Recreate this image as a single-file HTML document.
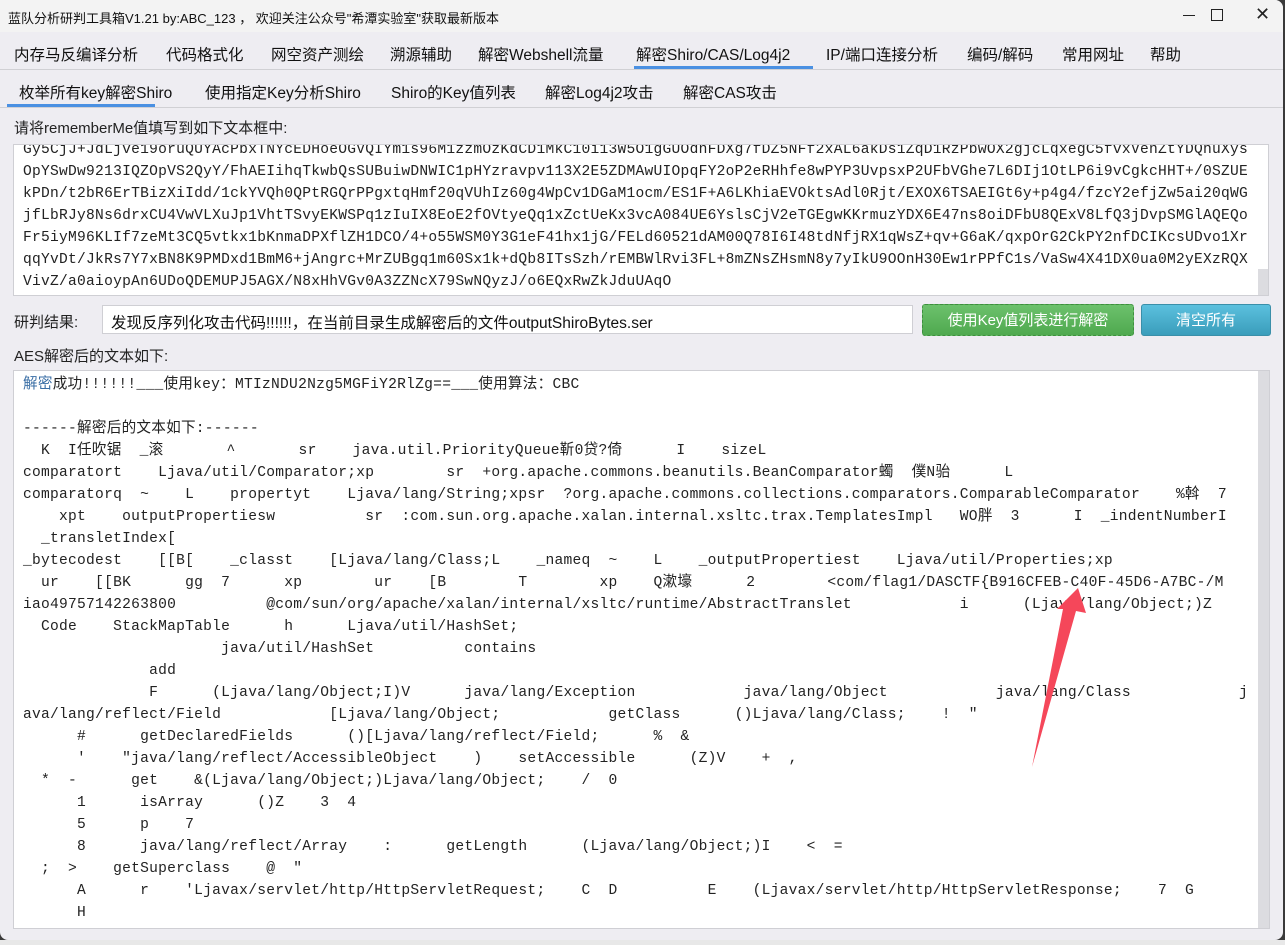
<!DOCTYPE html>
<html><head><meta charset="utf-8"><style>
*{margin:0;padding:0;box-sizing:border-box}
body{width:1285px;height:945px;overflow:hidden;background:#3a3a3a;font-family:"Liberation Sans","Noto Sans CJK SC",sans-serif;position:relative}
#win{position:absolute;left:0;top:0;width:1283px;height:940px;background:#eeedf2;border-radius:0 8px 8px 8px;overflow:hidden}
#title{position:absolute;left:0;top:0;width:100%;height:32px;background:#f3f3f3;font-size:13px;color:#111}
#title span{position:absolute;left:8px;top:8px}
.ctl{position:absolute;top:6px;font-size:16px;color:#222}
.menu{position:absolute;left:0;top:34px;height:36px;width:100%;border-bottom:1px solid #d0d0d4;font-size:15.5px;color:#111}
.menu span,.sub span{position:absolute;top:9px;white-space:nowrap}
.sub{position:absolute;left:0;top:72px;height:36px;width:100%;border-bottom:1px solid #d0d0d4;font-size:15.5px;color:#111}
.ul{position:absolute;height:3px;background:#4a90e2}
.lbl{position:absolute;font-size:15px;color:#222}
.box{position:absolute;background:#fff;border:1px solid #cfcfd4;overflow:hidden}
pre{font-family:"Liberation Mono","Noto Sans CJK SC",monospace;font-size:14.6px;line-height:22px;color:#222;white-space:pre;letter-spacing:0.25px}
.btn{position:absolute;color:#fff;font-size:15px;text-align:center;line-height:30px;border-radius:3px}
</style></head><body>
<div id="win">
<div id="title"><span>蓝队分析研判工具箱V1.21 by:ABC_123 ， 欢迎关注公众号"希潭实验室"获取最新版本</span>
<div class="ctl" style="left:1183px;top:5px;width:12px;height:1px;border-top:1.5px solid #222;margin-top:10px"></div>
<div class="ctl" style="left:1211px;top:5px;width:12px;height:12px;border:1.5px solid #222;margin-top:4px"></div>
<div class="ctl" style="left:1255px;top:4px;font-size:18px">✕</div></div>
<div class="menu">
<span style="left:14px">内存马反编译分析</span><span style="left:166px">代码格式化</span><span style="left:271px">网空资产测绘</span><span style="left:390px">溯源辅助</span><span style="left:478px">解密Webshell流量</span><span style="left:636px">解密Shiro/CAS/Log4j2</span><span style="left:826px">IP/端口连接分析</span><span style="left:967px">编码/解码</span><span style="left:1062px">常用网址</span><span style="left:1150px">帮助</span>
<div class="ul" style="left:634px;width:179px;top:32px"></div>
</div>
<div class="sub">
<span style="left:19px">枚举所有key解密Shiro</span><span style="left:205px">使用指定Key分析Shiro</span><span style="left:391px">Shiro的Key值列表</span><span style="left:545px">解密Log4j2攻击</span><span style="left:683px">解密CAS攻击</span>
<div class="ul" style="left:7px;width:148px;top:32px"></div>
</div>
<div class="lbl" style="left:14px;top:117px">请将rememberMe值填写到如下文本框中:</div>
<div class="box" style="left:13px;top:144px;width:1256px;height:152px">
<div style="position:absolute;right:0;top:124px;width:10px;height:28px;background:#dcdce0"></div>
<pre style="position:absolute;left:9px;top:-6px">Gy5CjJ+JdLjve19oruQUYAcPbxTNYcEDHoeOGVQIYm1s96M1zzmOzKdCD1MkC10i13W5O1gGUOdnFDXg7fDZ5NFf2xAL6akDs1ZqD1RzPbwOX2gjcLqxegC5fvxVenZtYDQhuXys
OpYSwDw9213IQZOpVS2QyY/FhAEIihqTkwbQsSUBuiwDNWIC1pHYzravpv113X2E5ZDMAwUIOpqFY2oP2eRHhfe8wPYP3UvpsxP2UFbVGhe7L6DIj1OtLP6i9vCgkcHHT+/0SZUE
kPDn/t2bR6ErTBizXiIdd/1ckYVQh0QPtRGQrPPgxtqHmf20qVUhIz60g4WpCv1DGaM1ocm/ES1F+A6LKhiaEVOktsAdl0Rjt/EXOX6TSAEIGt6y+p4g4/fzcY2efjZw5ai20qWG
jfLbRJy8Ns6drxCU4VwVLXuJp1VhtTSvyEKWSPq1zIuIX8EoE2fOVtyeQq1xZctUeKx3vcA084UE6YslsCjV2eTGEgwKKrmuzYDX6E47ns8oiDFbU8QExV8LfQ3jDvpSMGlAQEQo
Fr5iyM96KLIf7zeMt3CQ5vtkx1bKnmaDPXflZH1DCO/4+o55WSM0Y3G1eF41hx1jG/FELd60521dAM00Q78I6I48tdNfjRX1qWsZ+qv+G6aK/qxpOrG2CkPY2nfDCIKcsUDvo1Xr
qqYvDt/JkRs7Y7xBN8K9PMDxd1BmM6+jAngrc+MrZUBgq1m60Sx1k+dQb8ITsSzh/rEMBWlRvi3FL+8mZNsZHsmN8y7yIkU9OOnH30Ew1rPPfC1s/VaSw4X41DX0ua0M2yEXzRQX
VivZ/a0aioypAn6UDoQDEMUPJ5AGX/N8xHhVGv0A3ZZNcX79SwNQyzJ/o6EQxRwZkJduUAqO</pre></div>
<div class="lbl" style="left:14px;top:311px">研判结果:</div>
<div class="box" style="left:102px;top:305px;width:811px;height:29px;font-size:15.5px;color:#111;padding:5px 8px">发现反序列化攻击代码!!!!!!，在当前目录生成解密后的文件outputShiroBytes.ser</div>
<div class="btn" style="left:922px;top:304px;width:212px;height:32px;line-height:32px;background:linear-gradient(#6cc16c,#4fa94f);border:1px dashed #3e8e3e">使用Key值列表进行解密</div>
<div class="btn" style="left:1141px;top:304px;width:130px;height:32px;line-height:32px;background:linear-gradient(#5bc0de,#3a9dbb);border:1px solid #3a8fa9">清空所有</div>
<div class="lbl" style="left:14px;top:345px">AES解密后的文本如下:</div>
<div class="box" style="left:13px;top:370px;width:1257px;height:559px">
<div style="position:absolute;right:0;top:0;width:11px;height:100%;background:#dcdce0"></div>
<pre style="position:absolute;left:9px;top:3px"><span style="color:#3a6ea5">解密</span>成功!!!!!!___使用key：MTIzNDU2Nzg5MGFiY2RlZg==___使用算法：CBC

------解密后的文本如下:------
  K  I任吹锯  _滚       ^       sr    java.util.PriorityQueue靳0贷?倚      I    sizeL
comparatort    Ljava/util/Comparator;xp        sr  +org.apache.commons.beanutils.BeanComparator蠋  僕N骀      L
comparatorq  ~    L    propertyt    Ljava/lang/String;xpsr  ?org.apache.commons.collections.comparators.ComparableComparator    %斡  7
    xpt    outputPropertiesw          sr  :com.sun.org.apache.xalan.internal.xsltc.trax.TemplatesImpl   WO胖  3      I  _indentNumberI
  _transletIndex[
_bytecodest    [[B[    _classt    [Ljava/lang/Class;L    _nameq  ~    L    _outputPropertiest    Ljava/util/Properties;xp
  ur    [[BK      gg  7      xp        ur    [B        T        xp    Q漱壕      2        &lt;com/flag1/DASCTF{B916CFEB-C40F-45D6-A7BC-/M
iao49757142263800          @com/sun/org/apache/xalan/internal/xsltc/runtime/AbstractTranslet            i      (Ljava/lang/Object;)Z
  Code    StackMapTable      h      Ljava/util/HashSet;
                      java/util/HashSet          contains
              add
              F      (Ljava/lang/Object;I)V      java/lang/Exception            java/lang/Object            java/lang/Class            j
ava/lang/reflect/Field            [Ljava/lang/Object;            getClass      ()Ljava/lang/Class;    !  ″
      #      getDeclaredFields      ()[Ljava/lang/reflect/Field;      %  &amp;
      '    ″java/lang/reflect/AccessibleObject    )    setAccessible      (Z)V    +  ,
  *  -      get    &amp;(Ljava/lang/Object;)Ljava/lang/Object;    /  0
      1      isArray      ()Z    3  4
      5      p    7
      8      java/lang/reflect/Array    :      getLength      (Ljava/lang/Object;)I    &lt;  =
  ;  &gt;    getSuperclass    @  ″
      A      r    'Ljavax/servlet/http/HttpServletRequest;    C  D          E    (Ljavax/servlet/http/HttpServletResponse;    7  G
      H</pre></div>
<svg style="position:absolute;left:0;top:0" width="1285" height="945"><polygon points="1078,588 1086,613 1076,611 1032,767 1063,609 1057,609" fill="#f5475a"/></svg>
</div>
<div style="position:absolute;left:0;top:940px;width:1285px;height:5px;background:#e8e8e8"></div>
</body></html>
